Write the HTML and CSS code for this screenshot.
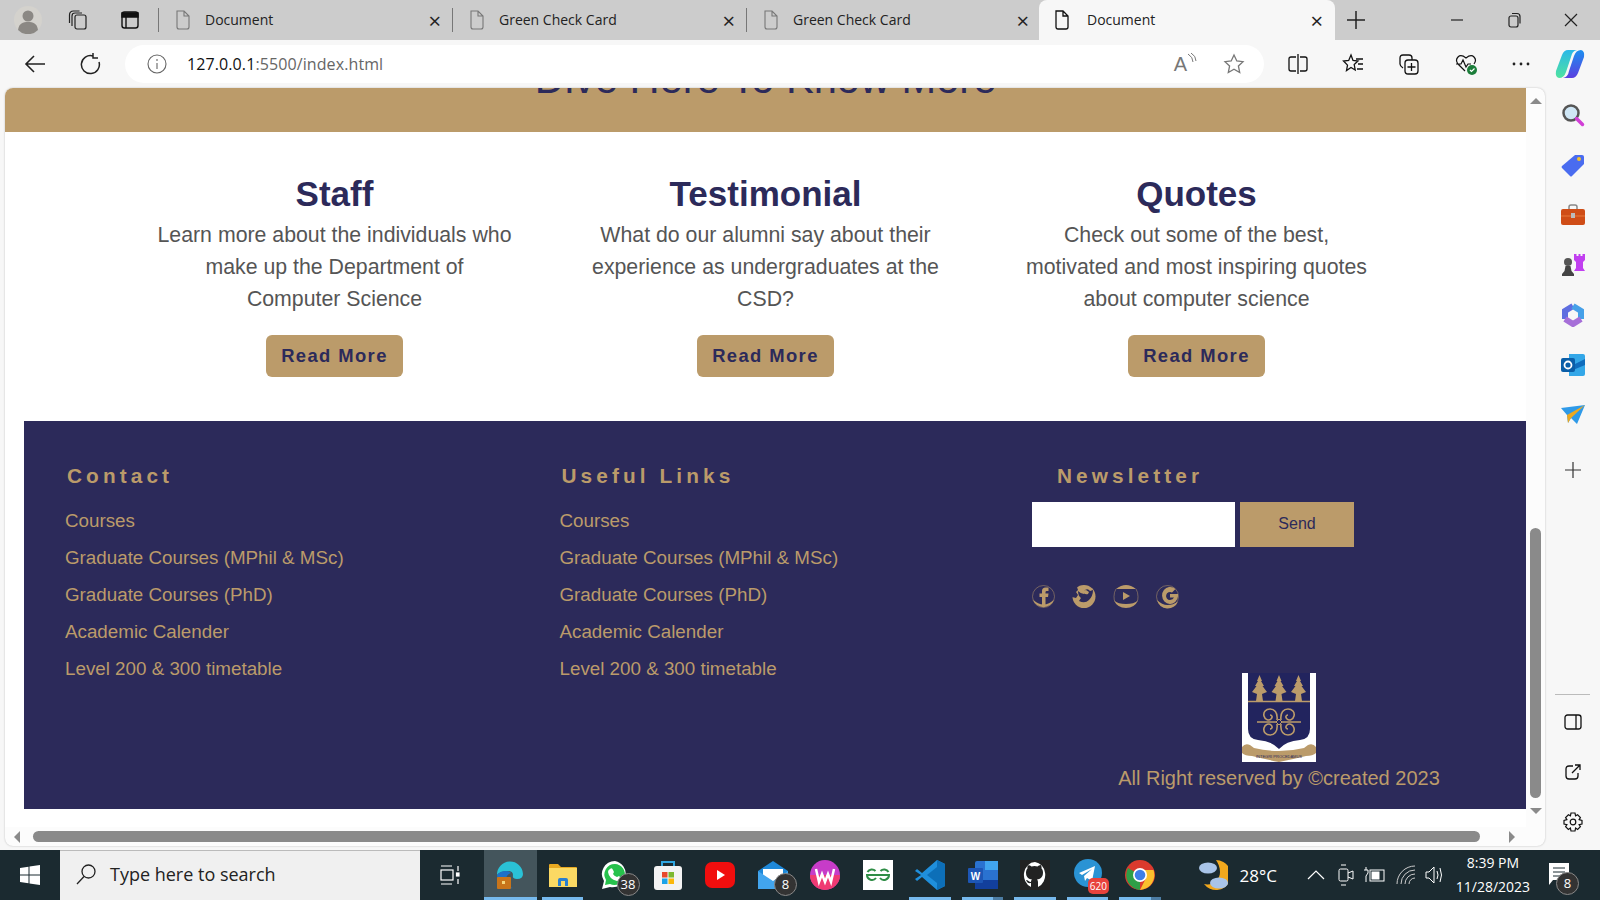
FILE: index.html
```html
<!DOCTYPE html>
<html lang="en">
<head>
  <meta charset="UTF-8">
  <meta name="viewport" content="width=device-width, initial-scale=1.0">
  <title>Document</title>
  <link rel="stylesheet" href="styles.css">
</head>
<body>
  <!-- tab strip -->
  <div class="tabstrip">
    <div class="strip-left">
      <svg class="avatar" width="28" height="28" viewBox="0 0 28 28"><circle cx="14" cy="14" r="14" fill="#d4d2cd"/><circle cx="14" cy="10" r="5.500" fill="#8b8884"/><path d="M4 24c1-7 5-8 10-8s9 1 10 8a14 14 0 0 1-20 0z" fill="#8b8884"/></svg>
      <svg class="strip-icon" width="22" height="22" viewBox="0 0 22 22" fill="none" stroke="#222" stroke-width="1.200"><rect x="8" y="6" width="11" height="14" rx="2"/><path d="M5 17V7q0-3 3-3h7M2.500 14V6q0-4 4-4h6"/></svg>
      <svg class="strip-icon" width="20" height="20" viewBox="0 0 20 20" fill="none" stroke="#111" stroke-width="1.400"><rect x="2" y="2" width="16" height="16" rx="2.500"/><path d="M2 3h16v4H2z" fill="#111"/><path d="M6 7v11"/></svg>
    </div>
    <div class="tab">
      <svg class="page-icon" width="16" height="20" viewBox="0 0 16 20" fill="none" stroke="#777" stroke-width="1.100"><path d="M2 1h7l5 5v11q0 2-2 2H4q-2 0-2-2zM9 1v5h5"/></svg>
      <span class="tab-title">Document</span><span class="tab-close">&#215;</span>
    </div>
    <div class="tab">
      <svg class="page-icon" width="16" height="20" viewBox="0 0 16 20" fill="none" stroke="#777" stroke-width="1.100"><path d="M2 1h7l5 5v11q0 2-2 2H4q-2 0-2-2zM9 1v5h5"/></svg>
      <span class="tab-title">Green Check Card</span><span class="tab-close">&#215;</span>
    </div>
    <div class="tab">
      <svg class="page-icon" width="16" height="20" viewBox="0 0 16 20" fill="none" stroke="#777" stroke-width="1.100"><path d="M2 1h7l5 5v11q0 2-2 2H4q-2 0-2-2zM9 1v5h5"/></svg>
      <span class="tab-title">Green Check Card</span><span class="tab-close">&#215;</span>
    </div>
    <div class="tab tab-active">
      <svg class="page-icon" width="16" height="20" viewBox="0 0 16 20" fill="none" stroke="#111" stroke-width="1.300"><path d="M2 1h7l5 5v11q0 2-2 2H4q-2 0-2-2zM9 1v5h5"/></svg>
      <span class="tab-title">Document</span><span class="tab-close">&#215;</span>
    </div>
    <svg class="new-tab" width="18" height="18" viewBox="0 0 18 18" stroke="#222" stroke-width="1.500"><path d="M9 0v18M0 9h18"/></svg>
    <div class="window-btns">
      <svg width="14" height="14" viewBox="0 0 14 14" stroke="#222" stroke-width="1.200"><path d="M1 7h12"/></svg>
      <svg width="14" height="16" viewBox="0 0 14 16" fill="none" stroke="#222" stroke-width="1.200"><rect x="2" y="4" width="9" height="11" rx="2"/><path d="M5 1.500h5q3 0 3 3v7"/></svg>
      <svg width="14" height="14" viewBox="0 0 14 14" stroke="#222" stroke-width="1.200"><path d="M1 1l12 12M13 1L1 13"/></svg>
    </div>
  </div>

  <!-- toolbar -->
  <div class="toolbar">
    <svg class="tool-back" width="22" height="20" viewBox="0 0 22 20" fill="none" stroke="#222" stroke-width="1.600"><path d="M21 10H2M10 2l-8 8 8 8"/></svg>
    <svg class="tool-reload" width="22" height="22" viewBox="0 0 22 22" fill="none" stroke="#222" stroke-width="1.500"><path d="M14 3a9 9 0 1 0 6 6M14 0v5h5"/></svg>
    <div class="addressbar">
      <svg width="20" height="20" viewBox="0 0 20 20" fill="none" stroke="#666" stroke-width="1.100"><circle cx="10" cy="10" r="9"/><path d="M10 9v6M10 5v2"/></svg>
      <span class="url"><span class="url-host">127.0.0.1</span>:5500/index.html</span>
      <span class="read-aloud">A<svg width="10" height="12" viewBox="0 0 10 12" fill="none" stroke="#777"><path d="M1 1q5 3 5 8M4 0q5 3 5 8"/></svg></span>
      <svg class="fav-star" width="22" height="22" viewBox="0 0 22 22" fill="none" stroke="#777" stroke-width="1.300"><path d="M11 2l2.800 6 6.200.700-4.600 4.300 1.300 6.500L11 16.300 5.300 19.500l1.300-6.500L2 8.700 8.200 8z"/></svg>
    </div>
    <div class="tool-right">
      <svg width="20" height="20" viewBox="0 0 20 20" fill="none" stroke="#111" stroke-width="1.300"><path d="M10 0v20M8 3H3q-2 0-2 2v10q0 2 2 2h5M12 3h5q2 0 2 2v10q0 2-2 2h-5"/></svg>
      <svg width="22" height="22" viewBox="0 0 22 22" fill="none" stroke="#111" stroke-width="1.300"><path d="M9 2l2 5.500 5 .5-3.800 3.600 1 5.400L9 14.500 4.500 17.500l1-5.400L1.500 8l5.200-.5zM14 6h7M16 11h5M15 16h6"/></svg>
      <svg width="22" height="22" viewBox="0 0 22 22" fill="none" stroke="#111" stroke-width="1.300"><rect x="7" y="7" width="13" height="14" rx="3"/><path d="M13.500 10v8M9.500 14h8M5 15q-3-2-3-4V5q0-3 3-3h6q3 0 3 3v2"/></svg>
      <svg width="24" height="24" viewBox="0 0 24 24" fill="none" stroke="#111" stroke-width="1.200"><path d="M11 19L4 12Q1 8 4 5t8 1q5-4 8-1t0 7M2 12h5l2-4 3 7 2-3h3"/><circle cx="18" cy="18" r="5" fill="#1b7d3a" stroke="none"/><path d="M16 18l1.500 1.500 3-3" stroke="#fff"/></svg>
      <svg width="18" height="4" viewBox="0 0 18 4" fill="#222"><circle cx="2" cy="2" r="1.400"/><circle cx="9" cy="2" r="1.400"/><circle cx="16" cy="2" r="1.400"/></svg>
      <svg class="copilot" width="30" height="30" viewBox="0 0 30 30">
        <defs>
          <linearGradient id="copilotLeft" x1="0" y1="0" x2="0" y2="1"><stop offset="0" stop-color="#2bb8e8"/><stop offset="1" stop-color="#4fe3a0"/></linearGradient>
          <linearGradient id="copilotRight" x1="0" y1="0" x2="0" y2="1"><stop offset="0" stop-color="#1c8ff0"/><stop offset="1" stop-color="#5b3fe0"/></linearGradient>
        </defs>
        <path d="M13 1h9q-5 1-6 7l-5 15q-2 6-7 6-4-1-3-7L7 6q2-5 6-5z" fill="url(#copilotLeft)"/>
        <path d="M17 29H8q5-1 6-7l5-15q2-6 7-6 4 1 3 7l-6 16q-2 5-6 5z" fill="url(#copilotRight)"/>
      </svg>
    </div>
  </div>

  <div class="middle">
    <!-- page frame with scrollbars -->
    <div class="frame">
      <div class="frame-top">
        <main class="page">
          <div class="banner"><h1 class="banner-title">Dive Here To Know More</h1></div>

          <section class="cards">
            <div class="card">
              <h2>Staff</h2>
              <p>Learn more about the individuals who make up the Department of Computer Science</p>
              <a class="read-btn" href="#">Read More</a>
            </div>
            <div class="card">
              <h2>Testimonial</h2>
              <p>What do our alumni say about their experience as undergraduates at the CSD?</p>
              <a class="read-btn" href="#">Read More</a>
            </div>
            <div class="card">
              <h2>Quotes</h2>
              <p>Check out some of the best, motivated and most inspiring quotes about computer science</p>
              <a class="read-btn" href="#">Read More</a>
            </div>
          </section>

          <footer class="footer">
            <div class="foot-col">
              <h4>Contact</h4>
              <ul>
                <li><a href="#">Courses</a></li>
                <li><a href="#">Graduate Courses (MPhil &amp; MSc)</a></li>
                <li><a href="#">Graduate Courses (PhD)</a></li>
                <li><a href="#">Academic Calender</a></li>
                <li><a href="#">Level 200 &amp; 300 timetable</a></li>
              </ul>
            </div>
            <div class="foot-col">
              <h4>Useful Links</h4>
              <ul>
                <li><a href="#">Courses</a></li>
                <li><a href="#">Graduate Courses (MPhil &amp; MSc)</a></li>
                <li><a href="#">Graduate Courses (PhD)</a></li>
                <li><a href="#">Academic Calender</a></li>
                <li><a href="#">Level 200 &amp; 300 timetable</a></li>
              </ul>
            </div>
            <div class="foot-col foot-news">
              <h4>Newsletter</h4>
              <form class="news-form">
                <input type="text" aria-label="Email">
                <button type="button">Send</button>
              </form>
              <div class="socials">
                <svg width="23" height="25" viewBox="0 0 23 25"><circle cx="11.500" cy="12.500" r="11" fill="none" stroke="#bb9b6a" stroke-width=".5"/><path d="M1 15.500A11 11 0 0 0 22 15.500Q17 20.500 11.500 20.500T1 15.500z" fill="#bb9b6a"/><path d="M10 21V13H7.500V9.500H10V7q0-3.500 3.500-3.500H16.500V7h-1.800q-1.200 0-1.200 1.200v1.300H16.500L16 13h-2.500v8z" fill="#bb9b6a"/></svg>
                <svg width="24" height="25" viewBox="0 0 24 25"><circle cx="12" cy="12.500" r="11.500" fill="#bb9b6a"/><path d="M0 3h5l1 3-2 2 2 3-2 3-4-1z" fill="#2c2a5a"/><path d="M7 17q6 3 10-1 4-4 4-10l-3 1q-2-3-5-1-2 2-1 4-3 0-6-3 0 5 3 7z" fill="#2c2a5a"/><path d="M10 7q2 4 6 3l1-2-3-2z" fill="#bb9b6a"/></svg>
                <svg width="26" height="25" viewBox="0 0 26 25"><path d="M3 5Q8 1 13 1t10 4H4zM1 16.500a13 12 0 0 0 24 0Q21 20 13 20T1 16.500z" fill="#bb9b6a"/><path d="M3 5Q1 8 1 12.500t1 5M23 5q2 3 2 7.500t-1 5" fill="none" stroke="#bb9b6a" stroke-width=".5"/><path d="M10 8v8l7-4z" fill="#bb9b6a"/></svg>
                <svg width="23" height="25" viewBox="0 0 23 25"><circle cx="11.500" cy="12.500" r="11" fill="none" stroke="#bb9b6a" stroke-width=".5"/><path d="M1 16A11 11 0 0 0 22 17.500Q17 21 11.500 21T1 16z" fill="#bb9b6a"/><path d="M13 3a8 8.500 0 1 0 9 9.500V10h-8v3.500h4q-1 2-4 2.500a4 4 0 1 1 2-7.500l3.500-3.500A8 8 0 0 0 13 3z" fill="#bb9b6a"/></svg>
              </div>
              <div class="brand">
                <svg class="crest" width="74" height="89" viewBox="0 0 74 89">
                  <rect width="74" height="89" fill="#fff"/>
                  <path d="M6 0h62v56q0 10-10 11-14 1-21 9-7-8-21-9-10-1-10-11z" fill="#22245e"/>
                  <path d="M6 28.500h62" stroke="#bb9b6a" stroke-width="1.300"/>
                  <g fill="#bb9b6a">
                    <path d="M17.500 2L20 8H19L22 13H20.500L25 19 20 21 21 28H14L15 21 10 19 14.500 13H13L16 8H15z"/>
                    <path d="M37 2L39.500 8H38.500L41.500 13H40L44.500 19 39.500 21 40.500 28H33.500L34.500 21 29.500 19 34 13H32.500L35.500 8H34.500z"/>
                    <path d="M56.500 2L59 8H58L61 13H59.500L64 19 59 21 60 28H53L54 21 49 19 53.500 13H52L55 8H54z"/>
                  </g>
                  <g fill="none" stroke="#bb9b6a" stroke-width="1.600">
                    <path d="M15 49h44"/>
                    <path d="M35 47c1-8-3-11-7-11s-7 3-6 7 5 5 7 3 1-4-1-4M39 47c-1-8 3-11 7-11s7 3 6 7-5 5-7 3-1-4 1-4M35 51c1 8-3 11-7 11s-7-3-6-7 5-5 7-3 1 4-1 4M39 51c-1 8 3 11 7 11s7-3 6-7-5-5-7-3-1 4 1 4"/>
                  </g>
                  <path d="M37 46l3 3-3 3-3-3z" fill="#22245e" stroke="#bb9b6a"/>
                  <path d="M0 74q3-4 8-2l4 3q12 3 25 3t25-3l4-3q5-2 8 2v6q-3 3-10 3-12 3-27 6-15-3-27-6-7 0-10-3z" fill="#bb9b6a"/>
                  <text class="crest-motto" x="37" y="85" text-anchor="middle">INTEGRI PROCEDAMUS</text>
                </svg>
                <p class="copy">All Right reserved by &copy;created 2023</p>
              </div>
            </div>
          </footer>
        </main>
        <div class="vscroll">
          <span class="arrow-up"></span>
          <span class="vthumb"></span>
          <span class="arrow-down"></span>
        </div>
      </div>
      <div class="hscroll">
        <span class="arrow-left"></span>
        <span class="hthumb"></span>
        <span class="arrow-right"></span>
      </div>
    </div>

    <!-- edge sidebar -->
    <aside class="sidebar">
      <div class="side-btn"><svg width="24" height="24" viewBox="0 0 24 24"><circle cx="10" cy="10" r="7.500" fill="#cfe6f5" stroke="#555" stroke-width="2.500"/><path d="M15.500 15.500l6 6" stroke="#d13fd6" stroke-width="3.500" stroke-linecap="round"/></svg></div>
      <div class="side-btn"><svg width="24" height="24" viewBox="0 0 24 24"><path d="M14 2h7q2 0 2 2v7L11 23q-1 1-2 0L1 15q-1-1 0-2z" fill="#4a6cf0"/><circle cx="18" cy="6" r="2" fill="#f2c230"/></svg></div>
      <div class="side-btn"><svg width="24" height="22" viewBox="0 0 24 22"><path d="M8 6V3q0-2 2-2h4q2 0 2 2v3" fill="none" stroke="#888" stroke-width="1.500"/><rect y="5" width="24" height="16" rx="2" fill="#cf4d17"/><path d="M0 12h24" stroke="#e87a3c"/><rect x="10" y="9" width="4" height="5" fill="#bbb"/></svg></div>
      <div class="side-btn"><svg width="24" height="24" viewBox="0 0 24 24"><path d="M13 1h2.500v2h2V1h2v2h2V1H24v6l-2 2v6l2 3H13l2-3V9l-2-2z" fill="#c13ff0"/><circle cx="7" cy="9" r="4" fill="#555"/><path d="M4.500 13h5l1 5 2.500 3v2H1v-2l2.500-3z" fill="#444"/></svg></div>
      <div class="side-btn"><svg width="24" height="24" viewBox="0 0 24 24" fill="none" stroke-width="6"><path d="M4 16V8l8-5" stroke="#5e6ee0"/><path d="M12 3l8 5v8" stroke="#46a0e8"/><path d="M20 16l-8 5-8-5" stroke="#a66fd8"/></svg></div>
      <div class="side-btn"><svg width="24" height="24" viewBox="0 0 24 24"><path d="M8 1h14q2 0 2 2v18q0 2-2 2H8z" fill="#33a7e8"/><path d="M12 12l12-6v6l-12 5z" fill="#0f6cbd"/><rect y="5" width="14" height="14" rx="2" fill="#0a5ea8"/><circle cx="7" cy="12" r="3.500" fill="none" stroke="#fff" stroke-width="1.800"/></svg></div>
      <div class="side-btn"><svg width="24" height="20" viewBox="0 0 24 20"><path d="M0 3l24-3-8 19-6-6-3 5-1-8z" fill="#2f9ae8"/><path d="M6 10L24 0 10 13l-3 5z" fill="#eda920"/></svg></div>
      <div class="side-btn side-add"><svg width="16" height="16" viewBox="0 0 16 16" stroke="#333" stroke-width="1.200"><path d="M8 0v16M0 8h16"/></svg></div>
      <div class="side-spacer"></div>
      <div class="side-line"></div>
      <div class="side-btn"><svg width="18" height="16" viewBox="0 0 18 16" fill="none" stroke="#111" stroke-width="1.300"><rect x="1" y="1" width="16" height="14" rx="2.500"/><path d="M12 1v14"/></svg></div>
      <div class="side-btn"><svg width="16" height="16" viewBox="0 0 16 16" fill="none" stroke="#111" stroke-width="1.300"><path d="M8 2H4Q1 2 1 5v7q0 3 3 3h6q3 0 3-3V9M7 9l8-8M10 1h5v5"/></svg></div>
      <div class="side-btn"><svg width="20" height="20" viewBox="0 0 20 20" fill="none" stroke="#111" stroke-width="1.200"><path d="M8 1h4l.6 2.800 2-1 2.800 2.800-1.300 2L19 8.500v3.500l-2.900.600 1.300 2-2.800 2.800-2-1.300L12 19H8l-.6-2.900-2 1.300-2.800-2.800 1.300-2L1 12V8.500l2.900-.900-1.300-2 2.800-2.800 2 1z"/><circle cx="10" cy="10" r="2.800"/></svg></div>
    </aside>
  </div>

  <!-- windows taskbar -->
  <div class="taskbar">
    <svg class="start" width="20" height="20" viewBox="0 0 20 20" fill="#fff"><path d="M0 3l8.500-1.300v7.800H0zM9.500 1.500L20 0v9.500H9.500zM0 10.500h8.500v7.800L0 17zM9.500 10.500H20V20L9.500 18.500z"/></svg>
    <div class="search">
      <svg width="22" height="22" viewBox="0 0 22 22" fill="none" stroke="#222" stroke-width="1.300"><circle cx="13.500" cy="8.500" r="6.500"/><path d="M9 13.500L2 21"/></svg>
      <span>Type here to search</span>
    </div>
    <svg class="taskview" width="20" height="20" viewBox="0 0 20 20" fill="none" stroke="#fff" stroke-width="1.200"><path d="M1 1h11M1 19h11M18 1v5M18 14v5"/><rect x="1" y="5" width="12" height="10"/><rect x="16.500" y="8" width="2.500" height="3" fill="#fff"/></svg>
    <div class="apps">
      <div class="app app-active on">
        <svg width="30" height="30" viewBox="0 0 30 30"><path d="M2 15a13 13 0 0 1 26-1q0 5-6 5-5 0-4-4 0-4-5-4-8 0-11 4z" fill="#2ac1d6"/><path d="M2 15q3-4 9-4 4 0 5 2-6 2-5 9 1 5 7 6A13 13 0 0 1 2 15z" fill="#1d70c8"/><rect x="2" y="17" width="14" height="12" rx="1" fill="#c8741a"/><rect x="7" y="21" width="3" height="3" fill="#f5d57a"/></svg>
      </div>
      <div class="app on">
        <svg width="28" height="26" viewBox="0 0 28 26"><path d="M0 3q0-1 1-1h8l3 3h15q1 0 1 1v18q0 1-1 1H1q-1 0-1-1z" fill="#e8a921"/><rect y="6" width="28" height="19" fill="#fbd963"/><path d="M9 24v-6q0-2 2-2h6q2 0 2 2v6h-3v-5h-4v5z" fill="#2a7fd0"/></svg>
      </div>
      <div class="app">
        <svg width="30" height="30" viewBox="0 0 30 30"><path d="M15 1a13 13 0 0 0-11 20L2 29l8-2A13 13 0 1 0 15 1z" fill="#fff"/><path d="M15 4a10.500 10.500 0 0 0-9 16l-1 5 5-1a10.500 10.500 0 1 0 5-20z" fill="#27c24c"/><path d="M10 9q2-2 3 1l1 2-1 2q1 2 4 3l2-1 2 2q0 3-4 3-8-2-9-9 0-2 2-3z" fill="#fff"/></svg>
        <span class="count">38</span>
      </div>
      <div class="app">
        <svg width="28" height="32" viewBox="0 0 28 32"><path d="M8 8V3h12v5" fill="none" stroke="#2fa6e0" stroke-width="2"/><rect y="7" width="28" height="24" rx="3" fill="#f3f3f3"/><rect x="8" y="13" width="5.500" height="5.500" fill="#e8482c"/><rect x="14.500" y="13" width="5.500" height="5.500" fill="#7cb82f"/><rect x="8" y="19.500" width="5.500" height="5.500" fill="#1aa3e8"/><rect x="14.500" y="19.500" width="5.500" height="5.500" fill="#fbb80b"/></svg>
      </div>
      <div class="app">
        <svg width="30" height="30" viewBox="0 0 30 30"><rect y="2" width="30" height="26" rx="7" fill="#f10e0e"/><path d="M12 10v10l8-5z" fill="#fff"/></svg>
      </div>
      <div class="app">
        <svg width="30" height="30" viewBox="0 0 30 30"><path d="M15 1l15 10v18H0V11z" fill="#1e88d8"/><path d="M5 9h20v9l-10 6-10-6z" fill="#fff"/><path d="M0 11l15 10 15-10v18H0z" fill="#42a5ee"/></svg>
        <span class="count">8</span>
      </div>
      <div class="app">
        <svg width="30" height="30" viewBox="0 0 30 30"><circle cx="15" cy="15" r="15" fill="#c73cc8"/><path d="M0 15a15 15 0 0 0 15 15 15 15 0 0 0 15-15z" fill="#ef3a72"/><path d="M6 9l3 13 3-8 3 8 3-8 3 8 3-13" fill="none" stroke="#fff" stroke-width="2.500"/></svg>
      </div>
      <div class="app">
        <div class="gfg"><svg width="26" height="14" viewBox="0 0 26 14" fill="none" stroke="#2f8d46" stroke-width="2"><path d="M13 7H2a5 5 0 0 0 9 3M13 7h11a5 5 0 0 1-9 3M2.500 4a5 5 0 0 1 8-1M23.500 4a5 5 0 0 0-8-1"/></svg></div>
      </div>
      <div class="app on">
        <svg width="30" height="32" viewBox="0 0 30 32"><path d="M22 1l8 4v22l-8 4L7 18l-5 4-2-2 6-4-6-4 2-2 5 4z" fill="#1f8fdc"/><path d="M22 1l8 4v22l-8 4zM22 8L12 16l10 8z" fill="#0d6fb8"/></svg>
      </div>
      <div class="app on-split">
        <svg width="30" height="30" viewBox="0 0 30 30"><rect x="7" y="1" width="23" height="28" rx="2" fill="#2a72d0"/><rect x="17" y="1" width="13" height="9" fill="#41a5ee"/><rect x="7" y="20" width="23" height="9" fill="#123f9c"/><rect y="8" width="15" height="15" rx="1" fill="#1d56b5"/><text class="word-w" x="7.500" y="20" text-anchor="middle">W</text></svg>
      </div>
      <div class="app on">
        <div class="gh-box"><svg width="24" height="28" viewBox="0 0 24 28"><path d="M12 1a11.500 13 0 0 0-4 25v-4c-3 .700-4-1-5-3 2 0 3 2 5 2 0-1 .3-2 1-2.500-3-.5-6-2-6-7 0-1.500.5-3 1.500-4-.2-1 0-2.500.5-3.500 1.500 0 2.800 1 3.500 1.500a10 10 0 0 1 6 0c.7-.5 2-1.500 3.500-1.500.5 1 .7 2.500.5 3.500 1 1 1.500 2.500 1.500 4 0 5-3 6.500-6 7 .7.5 1 1.500 1 3v4.500A11.500 13 0 0 0 12 1z" fill="#fff"/></svg></div>
      </div>
      <div class="app on">
        <svg width="28" height="32" viewBox="0 0 28 32"><circle cx="14" cy="14" r="14" fill="#2a93d4"/><path d="M5 14l16-7-3 15-5-3-2 3-1-5 8-7-10 6z" fill="#fff"/></svg>
        <span class="count-red">620</span>
      </div>
      <div class="app on-split">
        <svg width="30" height="30" viewBox="0 0 30 30"><circle cx="15" cy="15" r="15" fill="#db3a2e"/><path d="M15 15L3 8A15 15 0 0 0 15 30z" fill="#2e9f47"/><path d="M15 10h13.500A15 15 0 0 1 15 30l6-12z" fill="#fbc02d"/><circle cx="15" cy="15" r="7" fill="#fff"/><circle cx="15" cy="15" r="5.300" fill="#3d7fe8"/></svg>
      </div>
    </div>
    <div class="tray">
      <svg class="weather" width="30" height="32" viewBox="0 0 30 32"><path d="M18 1a15 15 0 1 1-12 24c9 2 16-4 16-12 0-5-2-9-4-12z" fill="#f2a81d"/><ellipse cx="10" cy="9" rx="9" ry="5.500" fill="#a9c4e8"/><ellipse cx="21" cy="24" rx="9" ry="5.500" fill="#a9c4e8"/></svg>
      <span class="temp">28°C</span>
      <svg class="caret" width="18" height="10" viewBox="0 0 18 10" fill="none" stroke="#fff" stroke-width="1.200"><path d="M1 9l8-8 8 8"/></svg>
      <svg class="tray-meet" width="16" height="24" viewBox="0 0 16 24" fill="none" stroke="#fff"><rect x="1" y="6" width="9" height="12" rx="1.500"/><path d="M10 10l5-2v8l-5-2M3 2h5M3 22h5"/></svg>
      <svg class="tray-batt" width="22" height="16" viewBox="0 0 22 16" fill="none" stroke="#fff"><rect x="7" y="3" width="14" height="11"/><rect x="9" y="5" width="7" height="7" fill="#fff"/><path d="M3 0v3M1 3h4v3L3 9v6"/></svg>
      <svg class="tray-wifi" width="20" height="20" viewBox="0 0 20 20" fill="none" stroke="#ccc"><path d="M1 19A18 18 0 0 1 19 1M5 19A14 14 0 0 1 19 5M9 19A10 10 0 0 1 19 9M13 19a6 6 0 0 1 6-6"/></svg>
      <svg class="tray-vol" width="20" height="20" viewBox="0 0 20 20" fill="none" stroke="#fff"><path d="M1 7h3l5-5v16l-5-5H1zM12 6q2 4 0 8M15 3q3 7 0 14"/></svg>
      <div class="clock"><span>8:39 PM</span><span>11/28/2023</span></div>
      <div class="notif">
        <svg width="20" height="24" viewBox="0 0 20 24"><path d="M0 0h20v17H4l-4 5z" fill="#fff"/><path d="M4 5h12M4 9h12M4 13h8" stroke="#1b2a30"/></svg>
        <span class="count">8</span>
      </div>
    </div>
  </div>
</body>
</html>
```

FILE: styles.css
```css
/* browser window */
body {
  margin: 0;
  height: 900px;
  width: 1600px;
  overflow: hidden;
  display: flex;
  flex-direction: column;
  font-family: 'Liberation Sans', Arial, sans-serif;
  background-color: #f7f7f7;
}

svg {
  flex-shrink: 0;
  display: block;
}

/* tab strip */
.tabstrip {
  height: 40px;
  flex-shrink: 0;
  display: flex;
  align-items: center;
  background-color: #cccccc;
  font-family: 'Open Sans', sans-serif;
  font-size: 14px;
  color: #222;
}

.strip-left {
  width: 158px;
  display: flex;
  align-items: center;
}

.avatar {
  margin-left: 14px;
}

.strip-left .strip-icon:nth-child(2) {
  margin-left: 25px;
}

.strip-left .strip-icon:nth-child(3) {
  margin-left: 31px;
}

.tab {
  width: 294px;
  height: 24px;
  box-sizing: border-box;
  display: flex;
  align-items: center;
  border-left: 1px solid #777;
  padding-left: 16px;
  padding-right: 11px;
}

.tab-title {
  margin-left: 14px;
  margin-top: -2px;
  flex: 1;
}

.tab-close {
  font-size: 22px;
  line-height: 22px;
  color: #222;
}

.tab-active {
  width: 296px;
  height: 40px;
  margin-left: -1px;
  border-left: 0;
  border-radius: 8px 8px 0 0;
  background-color: #f7f7f7;
  padding-left: 15px;
  padding-right: 12px;
}

.tab-active .tab-title {
  margin-left: 17px;
}

.new-tab {
  margin-left: 12px;
}

.window-btns {
  margin-left: auto;
  display: flex;
  align-items: center;
  gap: 43px;
  padding-right: 22px;
}

/* toolbar */
.toolbar {
  height: 48px;
  flex-shrink: 0;
  display: flex;
  align-items: center;
  background-color: #f7f7f7;
}

.tool-back {
  margin-left: 24px;
}

.tool-reload {
  margin-left: 33px;
}

.addressbar {
  margin-left: 24px;
  width: 1139px;
  height: 38px;
  box-sizing: border-box;
  background-color: #fff;
  border-radius: 19px;
  display: flex;
  align-items: center;
  padding-left: 22px;
  padding-right: 19px;
  font-family: 'Open Sans', sans-serif;
}

.url {
  margin-left: 20px;
  flex: 1;
  font-size: 16px;
  letter-spacing: 0.1px;
  color: #666;
}

.url-host {
  color: #111;
}

.read-aloud {
  display: flex;
  font-family: 'Liberation Sans', sans-serif;
  font-size: 20px;
  color: #777;
  margin-right: 26px;
}

.tool-right {
  margin-left: 24px;
  display: flex;
  align-items: center;
  gap: 34px;
}

.copilot {
  margin-left: -9px;
}

/* middle row */
.middle {
  height: 762px;
  flex-shrink: 0;
  display: flex;
}

.frame {
  width: 1540px;
  margin-left: 5px;
  height: 758px;
  flex-shrink: 0;
  box-sizing: border-box;
  background-color: #fcfcfc;
  border-radius: 8px;
  overflow: hidden;
  display: flex;
  flex-direction: column;
  box-shadow: 0 0 2px rgba(0, 0, 0, 0.25);
}

.frame-top {
  height: 739px;
  display: flex;
}

.page {
  width: 1521px;
  flex-shrink: 0;
  background-color: #fff;
  overflow: hidden;
}

/* banner */
.banner {
  height: 44px;
  background-color: #bb9b6a;
  overflow: hidden;
  display: flex;
  justify-content: center;
  align-items: flex-end;
}

.banner-title {
  margin: 0 0 30px 0;
  font-size: 41.6px;
  line-height: 46px;
  font-weight: normal;
  color: #2c2a5a;
  white-space: nowrap;
}

/* cards */
.cards {
  display: grid;
  grid-template-columns: repeat(3, 431px);
  padding-left: 114px;
  padding-top: 42px;
}

.card {
  display: flex;
  flex-direction: column;
  align-items: center;
  text-align: center;
}

.card h2 {
  margin: 0;
  font-size: 35px;
  line-height: 40px;
  color: #2c2a5a;
}

.card p {
  margin: 5px 0 0;
  width: 355px;
  font-size: 21.3px;
  line-height: 32px;
  color: #555;
}

.read-btn {
  margin-top: 20px;
  width: 137px;
  height: 42px;
  line-height: 42px;
  border-radius: 6px;
  background-color: #bb9b6a;
  color: #2c2a5a;
  font-size: 18.4px;
  font-weight: bold;
  letter-spacing: 1.4px;
  text-decoration: none;
}

/* footer */
.footer {
  margin-top: 44px;
  margin-left: 19px;
  height: 388px;
  box-sizing: border-box;
  background-color: #2c2a5a;
  color: #bb9b6a;
  display: grid;
  grid-template-columns: 494.5px 472.5px 1fr;
  padding: 43px 0 0 41px;
}

.foot-col h4 {
  margin: 0 0 0 2px;
  font-size: 20.8px;
  line-height: 23px;
  letter-spacing: 4.1px;
}

.foot-col ul {
  list-style: none;
  margin: 15px 0 0;
  padding: 0;
}

.foot-col li {
  height: 37px;
  line-height: 37px;
  font-size: 18.8px;
}

.foot-col a {
  color: #bb9b6a;
  text-decoration: none;
}

.foot-news h4 {
  margin-left: 25px;
}

.news-form {
  margin-top: 15px;
  display: flex;
  gap: 5px;
}

.news-form input {
  width: 203px;
  height: 45px;
  box-sizing: border-box;
  border: 0;
  padding: 0;
  background-color: #fff;
}

.news-form button {
  width: 114px;
  height: 45px;
  border: 0;
  padding: 0 0 1px;
  background-color: #bb9b6a;
  color: #2c2a5a;
  font-family: 'Liberation Sans', sans-serif;
  font-size: 16px;
}

.socials {
  margin-top: 37px;
  display: flex;
  gap: 17px;
}

.brand {
  margin-top: 64px;
  margin-left: 60px;
  width: 374px;
  display: flex;
  flex-direction: column;
  align-items: center;
}

.crest-motto {
  font-family: 'Liberation Sans', sans-serif;
  font-size: 4px;
  fill: #2c2a5a;
}

.copy {
  margin: 4px 0 0;
  font-size: 20px;
  line-height: 24px;
  white-space: nowrap;
}

/* scrollbars */
.vscroll {
  width: 19px;
  position: relative;
  display: flex;
  flex-direction: column;
  align-items: center;
}

.arrow-up {
  margin-top: 10px;
  border-left: 6px solid transparent;
  border-right: 6px solid transparent;
  border-bottom: 6px solid #8a8a8a;
}

.vthumb {
  margin-top: 424px;
  width: 11px;
  height: 270px;
  border-radius: 6px;
  background-color: #8a8a8a;
}

.arrow-down {
  margin-top: 10px;
  border-left: 6px solid transparent;
  border-right: 6px solid transparent;
  border-top: 6px solid #8a8a8a;
}

.hscroll {
  height: 19px;
  display: flex;
  align-items: center;
}

.arrow-left {
  margin-left: 9px;
  border-top: 6px solid transparent;
  border-bottom: 6px solid transparent;
  border-right: 6px solid #8a8a8a;
}

.hthumb {
  margin-left: 13px;
  width: 1447px;
  height: 11px;
  border-radius: 6px;
  background-color: #8a8a8a;
}

.arrow-right {
  margin-left: 29px;
  border-top: 6px solid transparent;
  border-bottom: 6px solid transparent;
  border-left: 6px solid #8a8a8a;
}

/* sidebar */
.sidebar {
  flex: 1;
  display: flex;
  flex-direction: column;
  align-items: center;
  padding-top: 2px;
  padding-bottom: 3px;
}

.side-btn {
  height: 50px;
  flex-shrink: 0;
  display: flex;
  align-items: center;
  justify-content: center;
}

.side-add {
  margin-top: 5px;
}

.side-spacer {
  flex: 1;
}

.side-line {
  width: 35px;
  height: 1px;
  margin-bottom: 2px;
  background-color: #bbb;
}

/* taskbar */
.taskbar {
  height: 50px;
  flex-shrink: 0;
  display: flex;
  align-items: center;
  background-color: #1b2a30;
  color: #fff;
  font-family: 'Open Sans', sans-serif;
}

.start {
  margin-left: 20px;
}

.search {
  margin-left: 20px;
  width: 360px;
  height: 50px;
  box-sizing: border-box;
  background-color: #f0f0f0;
  border-top: 1px solid #bbb;
  display: flex;
  align-items: center;
  padding-left: 15px;
  padding-bottom: 3px;
  color: #222;
  font-size: 18px;
}

.search span {
  margin-left: 13px;
}

.taskview {
  margin-left: 20px;
}

.apps {
  margin-left: 24px;
  display: flex;
}

.app {
  width: 52.5px;
  height: 50px;
  box-sizing: border-box;
  position: relative;
  display: flex;
  align-items: center;
  justify-content: center;
}

.app-active {
  background-color: #44555c;
}

.on::after,
.on-split::after {
  content: "";
  position: absolute;
  left: 5px;
  right: 6px;
  bottom: 0;
  height: 3px;
  background-color: #76b9ed;
}

.app-active::after {
  left: 0;
  right: 0;
}

.on-split::after {
  background: linear-gradient(to right, #76b9ed 76%, #4c7ca3 76%);
}

/* little number badges */
.count {
  position: absolute;
  right: 2px;
  bottom: 4px;
  width: 23px;
  height: 23px;
  border-radius: 50%;
  border: 1px solid #888;
  box-sizing: border-box;
  background-color: #333;
  color: #fff;
  font-size: 13px;
  line-height: 21px;
  text-align: center;
}

.count-red {
  position: absolute;
  right: 5px;
  bottom: 6px;
  padding: 0 2px;
  border-radius: 5px;
  background-color: #e8423c;
  color: #fff;
  font-size: 10px;
  line-height: 16px;
}

.gfg {
  width: 30px;
  height: 30px;
  background-color: #fff;
  display: flex;
  align-items: center;
  justify-content: center;
}

.gh-box {
  width: 30px;
  height: 30px;
  background-color: #222;
  display: flex;
  align-items: center;
  justify-content: center;
}

.word-w {
  font-family: 'Liberation Sans', sans-serif;
  font-size: 10px;
  font-weight: bold;
  fill: #fff;
}

.tray {
  margin-left: 31px;
  display: flex;
  align-items: center;
}

.temp {
  margin-left: 12px;
  font-size: 17px;
}

.caret {
  margin-left: 30px;
}

.tray-meet {
  margin-left: 13px;
}

.tray-batt {
  margin-left: 9px;
}

.tray-wifi {
  margin-left: 11px;
}

.tray-vol {
  margin-left: 9px;
}

.clock {
  margin-left: 10px;
  width: 76px;
  display: flex;
  flex-direction: column;
  align-items: center;
  font-size: 14px;
  line-height: 24px;
  white-space: nowrap;
}

.notif {
  margin-left: 18px;
  position: relative;
}

.notif .count {
  right: -10px;
  bottom: -8px;
}
```
